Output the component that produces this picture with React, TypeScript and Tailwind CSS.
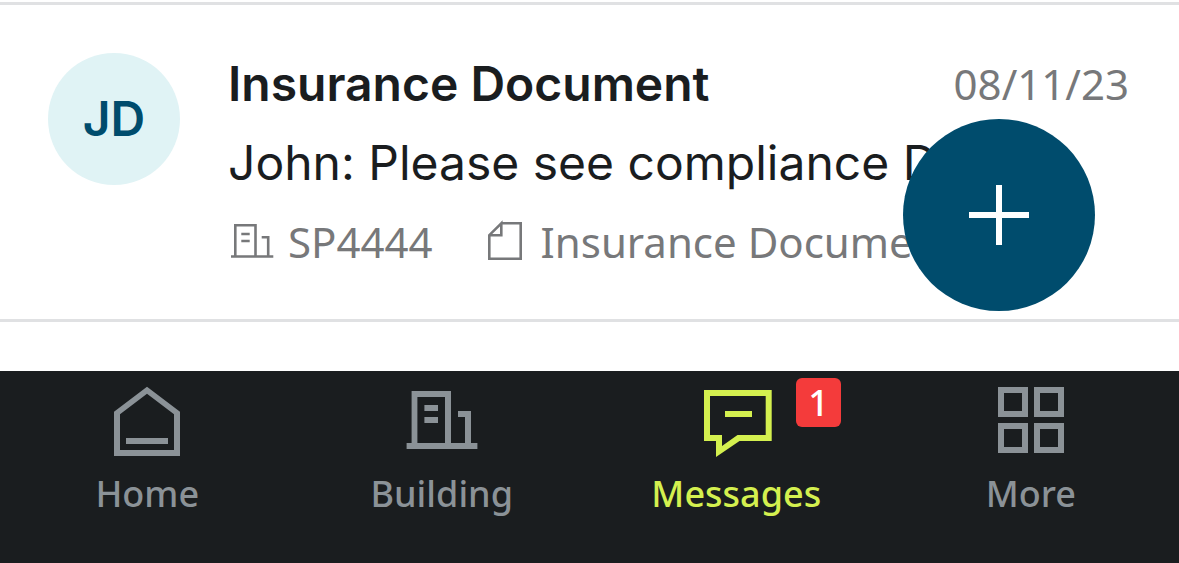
import { useState, type ReactNode } from "react";

type Message = {
  id: number;
  initials: string;
  title: string;
  date: string;
  preview: string;
  building: string;
  topic: string;
};

const messages: Message[] = [
  {
    id: 1,
    initials: "JD",
    title: "Insurance Document",
    date: "08/11/23",
    preview: "John: Please see compliance Doc",
    building: "SP4444",
    topic: "Insurance Document",
  },
];

function SmallBuildingIcon() {
  return (
    <svg viewBox="0 0 48 48" className="size-12 shrink-0" fill="none" stroke="currentColor" strokeWidth="2.6" aria-hidden="true">
      <path d="M3 38.5H45.3M7.3 38.5V7.3H27.5V38.5M33.7 19.3H40.2V38.5M13.3 16H21.7M13.3 23H21.7" />
    </svg>
  );
}

function DocumentIcon() {
  return (
    <svg viewBox="0 0 48 48" className="size-12 shrink-0" fill="none" stroke="currentColor" strokeWidth="2.6" aria-hidden="true">
      <path d="M20.3 5.3H39.7V40.7H8.3V17.2L20.3 5.3V17.2H8.3" />
    </svg>
  );
}

function NavIcon({ children }: { children: ReactNode }) {
  return (
    <svg viewBox="0 0 72 72" className="size-18 overflow-visible" fill="currentColor" fillRule="evenodd" aria-hidden="true">
      {children}
    </svg>
  );
}

const tabs = [
  {
    label: "Home",
    badge: 0,
    icon: <path d="M3 27.7L36 2.7L69 27.7V72H3ZM9 30.3V66H63V30.3L36 9.8ZM15 54H57V60H15Z" />,
  },
  {
    label: "Building",
    badge: 0,
    icon: (
      <path d="M.6 59H5.6V7H45V59H59V33H52V27H65V59H71.4V65H.6ZM11.4 13V59H39V13ZM18.4 21H32V27H18.4ZM18.4 33H32V39H18.4Z" />
    ),
  },
  {
    label: "Messages",
    badge: 1,
    icon: <path d="M4 6H71.7V57H39.5L16 73V57H4ZM10 12V51H22V62L37.5 51H65.7V12ZM25 27H52V33H25Z" />,
  },
  {
    label: "More",
    badge: 0,
    icon: (
      <path d="M3 3H33V33H3ZM9 9V27H27V9ZM39 3H69V33H39ZM45 9V27H63V9ZM3 39H33V69H3ZM9 45V63H27V45ZM39 39H69V69H39ZM45 45V63H63V45Z" />
    ),
  },
];

function MessageRow({ message }: { message: Message }) {
  return (
    <li className="flex gap-12 border-y-3 border-[#e0e1e3] pt-12 pr-[50px] pb-[46px] pl-12">
      <div className="flex size-33 shrink-0 items-center justify-center rounded-full bg-[#e0f3f5] text-[48px] font-semibold text-[#004c6d]">
        {message.initials}
      </div>
      <div className="flex min-w-0 flex-1 flex-col gap-[17px] leading-[62px]">
        <div className="flex justify-between gap-6">
          <h2 className="truncate text-[48px] font-semibold">{message.title}</h2>
          <time className="font-['Noto_Sans',sans-serif] text-[42px] text-[#77787a]">{message.date}</time>
        </div>
        <p className="truncate text-[48px]">{message.preview}</p>
        <div className="flex items-center gap-12 font-['Noto_Sans',sans-serif] text-[42px] text-[#77787a]">
          <span className="flex shrink-0 items-center gap-3">
            <SmallBuildingIcon />
            {message.building}
          </span>
          <span className="flex min-w-0 items-center gap-3">
            <DocumentIcon />
            <span className="truncate">{message.topic}</span>
          </span>
        </div>
      </div>
    </li>
  );
}

export default function App() {
  const [activeTab, setActiveTab] = useState("Messages");

  return (
    <div className="flex min-h-screen flex-col bg-white font-['Inter',sans-serif] text-[#1a1d1f]">
      <main className="relative flex-1 pt-0.5">
        <ul>
          {messages.map((message) => (
            <MessageRow key={message.id} message={message} />
          ))}
        </ul>

        {/* New message */}
        <button
          type="button"
          aria-label="New message"
          className="absolute right-21 bottom-15 flex size-48 items-center justify-center rounded-full bg-[#004c6d] text-white"
        >
          <svg viewBox="0 0 60 60" className="size-15" stroke="currentColor" strokeWidth="6" aria-hidden="true">
            <path d="M30 0V60M0 30H60" />
          </svg>
        </button>
      </main>

      {/* Bottom tabs */}
      <nav className="grid grid-cols-4 bg-[#1a1d1f] pt-[13px] pr-px pb-[45px] font-['Noto_Sans',sans-serif] text-[36px] font-medium">
        {tabs.map((tab) => (
          <button
            key={tab.label}
            type="button"
            onClick={() => setActiveTab(tab.label)}
            className={`flex flex-col items-center gap-[13px] leading-[49px] ${
              activeTab === tab.label ? "text-[#d4f04f]" : "text-[#8b9297]"
            }`}
          >
            <span className="relative">
              <NavIcon>{tab.icon}</NavIcon>
              {tab.badge > 0 && (
                <span className="absolute -top-1.5 left-full ml-6 rounded-md bg-[#f43b3b] px-3 text-white">
                  {tab.badge}
                </span>
              )}
            </span>
            {tab.label}
          </button>
        ))}
      </nav>
    </div>
  );
}
